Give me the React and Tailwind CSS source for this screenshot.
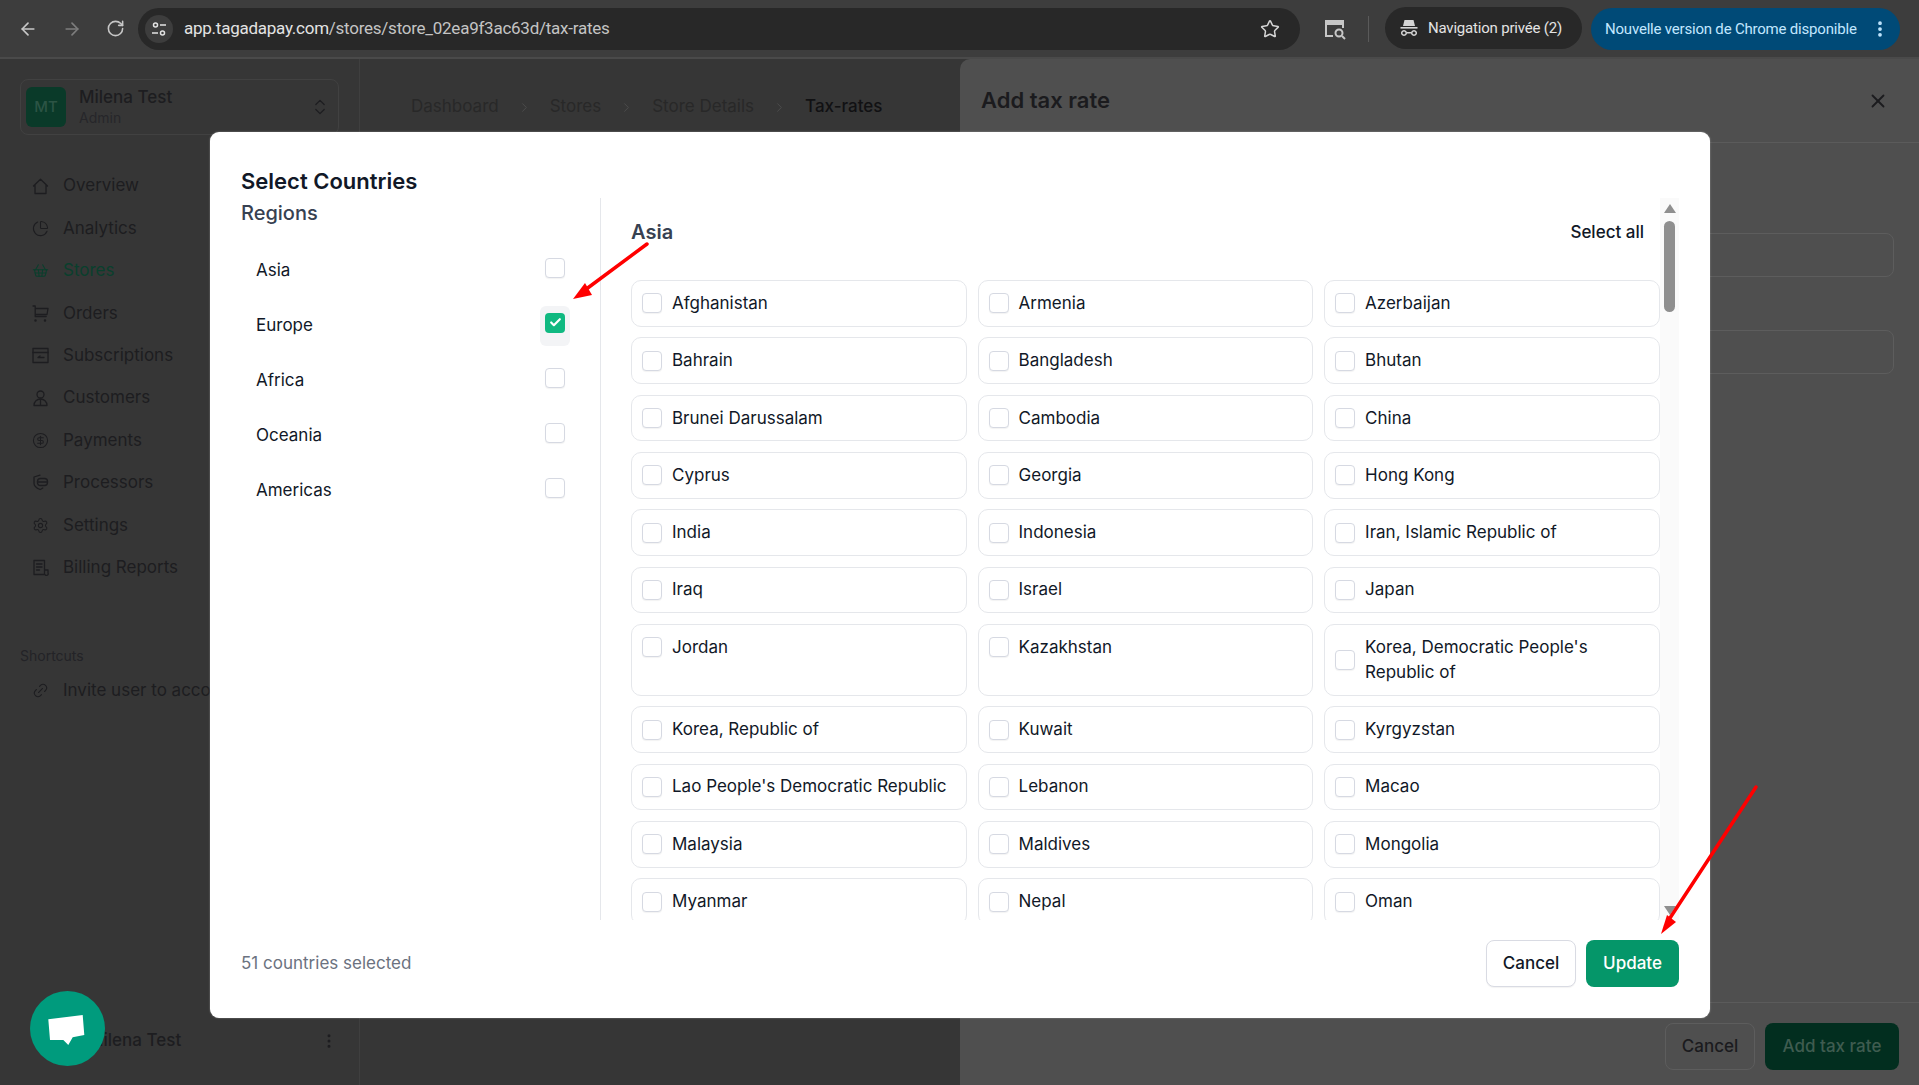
import { ArrowLeft, ArrowRight, RotateCw, Star, X, Check, ChevronRight, ChevronsUpDown, ChartPie, ShoppingBasket, CircleDollarSign, Settings, Link2, EllipsisVertical } from 'lucide-react';

const rows = [
  ['Afghanistan', 'Armenia', 'Azerbaijan'],
  ['Bahrain', 'Bangladesh', 'Bhutan'],
  ['Brunei Darussalam', 'Cambodia', 'China'],
  ['Cyprus', 'Georgia', 'Hong Kong'],
  ['India', 'Indonesia', 'Iran, Islamic Republic of'],
  ['Iraq', 'Israel', 'Japan'],
  ['Jordan', 'Kazakhstan', "Korea, Democratic People's Republic of"],
  ['Korea, Republic of', 'Kuwait', 'Kyrgyzstan'],
  ["Lao People's Democratic Republic", 'Lebanon', 'Macao'],
  ['Malaysia', 'Maldives', 'Mongolia'],
  ['Myanmar', 'Nepal', 'Oman'],
];

const regions = ['Asia', 'Europe', 'Africa', 'Oceania', 'Americas'];

// Small outline icons that lucide has no close match for
function Outline({ children }) {
  return (
    <svg width="17" height="17" viewBox="0 0 17 17" fill="none" stroke="currentColor" strokeWidth="1.3" strokeLinejoin="round" strokeLinecap="round">
      {children}
    </svg>
  );
}

const HomeIcon = () => <Outline><path d="M1.5 8 8.5 1.2 15.5 8M3 7v8.5h11V7" /></Outline>;
const CartIcon = () => <Outline><path d="M1 1h2.2v10.5h11M3.2 3.5H16l-1 6H3.2" /><circle cx="3.5" cy="15.5" r=".6" /><circle cx="13" cy="15.5" r=".6" /></Outline>;
const SubsIcon = () => <Outline><rect x="1" y="1.5" width="15" height="14" /><path d="M1 5.5h15M6 10.5h6M6 10.5l2-1.5" /></Outline>;
const UserIcon = () => <Outline><circle cx="8.5" cy="4.5" r="3.5" /><path d="M2 15.5c0-4 3-6.5 6.5-6.5S15 11.500 15 15.500ZM8.500 9v6.500" /></Outline>;
const ProcessorIcon = () => <Outline><path d="M8 1.200 2 3v6.500c0 2.500 2.500 4.500 6 6 1-.4 2-1 2.800-1.500" /><rect x="5.500" y="4.500" width="10" height="7" rx="3" /><path d="M5.500 8h10" /></Outline>;
const BillIcon = () => <Outline><path d="M12.500 15.500H2V1.500h10.500v14ZM12.500 11H16v3a1.500 1.500 0 0 1-3 1.500M4.500 5h5.500M4.500 8h5.500M4.500 11h3" /></Outline>;

const nav = [
  ['Overview', <HomeIcon />],
  ['Analytics', <ChartPie size={17} strokeWidth={1.5} />],
  ['Stores', <ShoppingBasket size={17} strokeWidth={1.5} />, true],
  ['Orders', <CartIcon />],
  ['Subscriptions', <SubsIcon />],
  ['Customers', <UserIcon />],
  ['Payments', <CircleDollarSign size={17} strokeWidth={1.5} />],
  ['Processors', <ProcessorIcon />],
  ['Settings', <Settings size={17} strokeWidth={1.5} />],
  ['Billing Reports', <BillIcon />],
];

function Box({ checked = false }) {
  if (checked) {
    return (
      <span className="flex h-5 w-5 shrink-0 items-center justify-center rounded-[4px] bg-[#10b981] text-white">
        <Check size={13} strokeWidth={4} />
      </span>
    );
  }
  return <span className="h-5 w-5 shrink-0 rounded-[4px] border border-[#d6d9e2] bg-white shadow-[0_1px_1px_rgba(0,0,0,0.05)]" />;
}

function CountryCard({ name }) {
  return (
    <div className="rounded-[10px] border border-[#e5e7eb] bg-white px-[10px] py-[9.85px]">
      <div className="flex items-center gap-[10px] text-[17px] leading-[25px] text-[#111827]">
        <Box />
        <span>{name}</span>
      </div>
    </div>
  );
}

function ChromeBar() {
  return (
    <div className="flex h-[59px] shrink-0 items-start border-b-2 border-[#4a4a4a] bg-[#3d3d3d] [font-family:Roboto,sans-serif]">
      <div className="flex h-[57px] items-center gap-[24px] pl-[18px] pr-[13px] text-[#c7c7c7]">
        <ArrowLeft size={20} strokeWidth={2} />
        <ArrowRight size={20} strokeWidth={2} className="text-[#7d7d7d]" />
        <RotateCw size={19} strokeWidth={2} />
      </div>
      <div className="mt-2 flex h-[42px] w-[1162px] items-center rounded-full bg-[#282828] pl-[7px] pr-[20px]">
        <span className="flex h-7 w-7 items-center justify-center rounded-full bg-[#3d3d3d]">
          <svg width="16" height="16" viewBox="0 0 16 16" fill="none" stroke="#e3e3e3" strokeWidth="1.5">
            <circle cx="4.500" cy="4" r="2" />
            <path d="M9 4h6M1 12h6" />
            <circle cx="11.500" cy="12" r="2" />
          </svg>
        </span>
        <span className="ml-[11px] flex-1 text-[17px] tracking-[-0.25px] text-[#e3e3e3]">
          app.tagadapay.com<span className="text-[#c4c4c4]">/stores/store_02ea9f3ac63d/tax-rates</span>
        </span>
        <Star size={20} strokeWidth={1.8} className="text-[#d5d5d5]" />
      </div>
      <div className="flex h-[57px] w-[68px] items-center justify-center pl-[2px] text-[#c7c7c7]">
        <svg width="24" height="24" viewBox="0 0 24 24" fill="none" stroke="currentColor" strokeWidth="2">
          <path d="M10 19H3V4h17v7" />
          <path d="M4 5h16v3H4z" fill="currentColor" stroke="none" />
          <circle cx="16" cy="16" r="3.500" />
          <path d="m19 19 3 3" />
        </svg>
      </div>
      <div className="mt-[16px] h-[26px] w-px bg-[#5a5a5a]" />
      <div className="ml-[16px] mt-[7px] flex h-[42px] w-[197px] items-center gap-[9px] rounded-full bg-[#282828] pl-[14px] text-[15px] tracking-[-0.2px] text-[#e3e3e3]">
        <svg width="20" height="20" viewBox="0 0 20 20" fill="#d5d5d5">
          <path d="M5.500 2h9l1.500 6H4z" />
          <path d="M1.500 9h17v1.600h-17z" />
          <path d="M5 12a3 3 0 1 0 .01 0Zm10 0a3 3 0 1 0 .01 0ZM5 13.500a1.500 1.500 0 1 1-.01 0Zm10 0a1.500 1.500 0 1 1-.01 0ZM8 14h4v1.500H8z" fillRule="evenodd" />
        </svg>
        <span>Navigation privée (2)</span>
      </div>
      <div className="ml-[9px] mt-2 flex h-[42px] w-[309px] items-center justify-between rounded-full bg-[#004a77] pl-[14px] pr-[10px] text-[15px] tracking-[-0.2px] text-[#c2e7ff]">
        <span>Nouvelle version de Chrome disponible</span>
        <EllipsisVertical size={20} strokeWidth={2.5} />
      </div>
    </div>
  );
}

function Sidebar() {
  return (
    <aside className="flex h-full w-[360px] shrink-0 flex-col border-r border-[#3f3f3f] px-[20px] pt-[20px] text-[#1d1d20]">
      <div className="flex h-[56px] items-center rounded-[8px] border border-[#414141] pl-[5px] pr-[8px]">
        <span className="flex h-10 w-10 items-center justify-center rounded-[6px] bg-[#0a3a29] text-[15px] font-medium text-[#2c5445]">MT</span>
        <div className="ml-[13px] flex-1">
          <div className="text-[17px] font-medium leading-[22px]">Milena Test</div>
          <div className="text-[14px] leading-[20px] text-[#26262a]">Admin</div>
        </div>
        <ChevronsUpDown size={20} strokeWidth={1.5} />
      </div>
      <nav className="mt-[30px]">
        {nav.map(([label, icon, active]) => (
          <div key={label} className={`flex h-[42.4px] items-center gap-[14px] pl-[12px] text-[17px] ${active ? 'text-[#0a3f2d]' : ''}`}>
            {icon}
            <span>{label}</span>
          </div>
        ))}
      </nav>
      <div className="mt-[57px] text-[14px] leading-[20px] text-[#232327]">Shortcuts</div>
      <div className="mt-[4px] flex h-[42px] items-center gap-[14px] whitespace-nowrap pl-[12px] text-[17px]">
        <Link2 size={17} strokeWidth={1.5} className="-rotate-45" />
        <span>Invite user to account</span>
      </div>
      <div className="mt-auto mb-[32px] flex h-[24px] items-center justify-between pl-[68px] pr-[1px]">
        <span className="text-[17px] font-medium">Milena Test</span>
        <EllipsisVertical size={18} strokeWidth={2} className="text-[#1d1d20]" />
      </div>
    </aside>
  );
}

function TaxSheet() {
  return (
    <div className="absolute bottom-0 left-[960px] right-0 top-[59px] flex flex-col rounded-tl-[10px] bg-[#4f4f4f]">
      <div className="flex h-[84px] items-center justify-between border-b border-[#5b5b5b] pl-[21px] pr-[30px] text-[#1b1b1e]">
        <span className="text-[22px] font-semibold">Add tax rate</span>
        <X size={22} strokeWidth={2} />
      </div>
      <div className="flex flex-1 flex-col px-[25px] pt-[90px]">
        <div className="h-[44px] rounded-[8px] border border-[#5d5d5d]" />
        <div className="mt-[53px] h-[44px] rounded-[8px] border border-[#5d5d5d]" />
      </div>
      <div className="flex h-[83px] items-start justify-end gap-[10px] border-t border-[#5b5b5b] pr-[20px] pt-[20px] text-[17px] font-medium">
        <span className="flex h-[47px] w-[90px] items-center justify-center rounded-[8px] border border-[#5d5d5d] text-[#1b1b1e]">Cancel</span>
        <span className="flex h-[47px] w-[134px] items-center justify-center rounded-[8px] bg-[#022e1f] text-[#3f5c50]">Add tax rate</span>
      </div>
    </div>
  );
}

function CountriesModal() {
  return (
    <div className="absolute left-[210px] top-[132px] h-[886px] w-[1500px] rounded-[9px] bg-white pl-[31px] pr-[31px] pt-[33px] shadow-[0_0_2px_rgba(255,255,255,0.4)]">
      <h2 className="h-[33px] text-[22px] font-semibold leading-[32px] text-[#111827]">Select Countries</h2>
      <div className="flex h-[722px]">
        {/* Régions */}
        <div className="w-[360px] shrink-0 border-r border-[#e5e7eb] pr-[30px]">
          <div className="text-[20px] font-medium leading-[30px] text-[#374151]">Regions</div>
          <div className="mt-[15px]">
            {regions.map((region) => (
              <div key={region} className="flex h-[55px] items-center justify-between pl-[15px] text-[17px] text-[#111827]">
                <span>{region}</span>
                <span className={`flex h-10 w-[30px] justify-center rounded-[6px] pt-[7px] ${region === 'Europe' ? 'bg-[#f3f4f6]' : ''}`}>
                  <Box checked={region === 'Europe'} />
                </span>
              </div>
            ))}
          </div>
        </div>
        {/* Pays */}
        <div className="flex min-w-0 flex-1 pl-[30px]">
          <div className="w-[1029px] shrink-0 overflow-hidden">
            <div className="flex h-[82px] items-start justify-between pr-[16px] pt-[19px]">
              <span className="text-[20px] font-semibold leading-[30px] text-[#374151]">Asia</span>
              <span className="text-[17px] font-medium leading-[30px] text-[#111827]">Select all</span>
            </div>
            <div className="grid grid-cols-3 gap-[10.65px]">
              {rows.flat().map((name) => (
                <CountryCard key={name} name={name} />
              ))}
            </div>
          </div>
          <div className="flex w-[19px] shrink-0 flex-col items-center bg-[#fafafa] pb-[5px] pt-[6px]">
            <svg width="12" height="9" viewBox="0 0 12 9" fill="#8f8f8f"><path d="M6 0l6 9H0z" /></svg>
            <div className="mt-[8px] h-[91px] w-[11px] rounded-full bg-[#8f8f8f]" />
            <svg className="mt-auto" width="12" height="9" viewBox="0 0 12 9" fill="#8f8f8f"><path d="M6 9L0 0h12z" /></svg>
          </div>
        </div>
      </div>
      <div className="mt-[20px] flex h-[47px] items-center justify-between">
        <span className="text-[17px] text-[#6b7280]">51 countries selected</span>
        <div className="flex gap-[10px] text-[17px] font-medium">
          <button className="h-[47px] w-[90px] rounded-[8px] border border-[#d9dbe3] bg-white text-[#111827] shadow-[0_1px_1px_rgba(0,0,0,0.05)]">Cancel</button>
          <button className="h-[47px] w-[93px] rounded-[8px] bg-[#059669] text-white">Update</button>
        </div>
      </div>
    </div>
  );
}

export default function App() {
  return (
    <div className="relative flex h-[1085px] w-[1919px] flex-col overflow-hidden bg-[#363636] [font-family:Inter,sans-serif]">
      <ChromeBar />
      <div className="flex min-h-0 flex-1">
        <Sidebar />
        <main className="flex-1 pl-[51px] pt-[36px]">
          <div className="flex h-6 items-center text-[17px] text-[#282828]">
            <span>Dashboard</span>
            <ChevronRight size={15} strokeWidth={1.5} className="mx-[18px] text-[#4d4d4d]" />
            <span>Stores</span>
            <ChevronRight size={15} strokeWidth={1.5} className="mx-[18px] text-[#4d4d4d]" />
            <span>Store Details</span>
            <ChevronRight size={15} strokeWidth={1.5} className="mx-[18px] text-[#4d4d4d]" />
            <span className="font-medium text-[#111113]">Tax-rates</span>
          </div>
        </main>
      </div>
      <TaxSheet />
      <CountriesModal />
      {/* Bulle de chat */}
      <svg className="absolute left-[30px] top-[991px]" width="75" height="75" viewBox="0 0 75 75">
        <circle cx="37.500" cy="37.500" r="37.500" fill="#009b7d" />
        <polygon points="18.300,28.300 52.700,24 54.300,44 42.700,46.300 38.300,54 33.300,49 20,49" fill="#fff" />
      </svg>
      {/* Flèches rouges de la capture */}
      <svg className="pointer-events-none absolute left-0 top-0" width="1919" height="1085">
        <path d="M647 244 585 290" stroke="#ff0000" strokeWidth="3.500" strokeLinecap="round" />
        <polygon points="573,299 585,283 592,295" fill="#ff0000" />
        <path d="M1756 787 1670 918" stroke="#ff0000" strokeWidth="3.500" strokeLinecap="round" />
        <polygon points="1661,934 1667,915 1676,922" fill="#ff0000" />
      </svg>
    </div>
  );
}
